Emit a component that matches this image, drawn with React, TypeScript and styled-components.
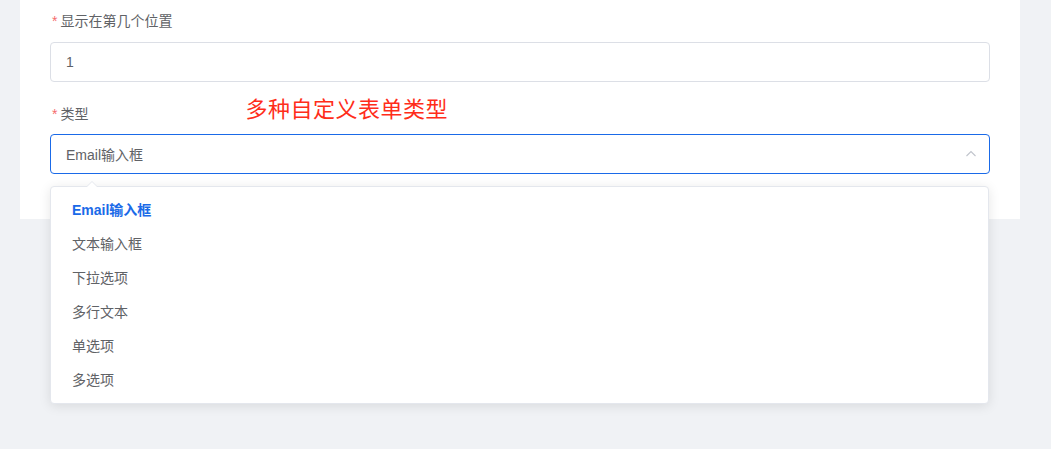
import React from "react";
import styled, { createGlobalStyle } from "styled-components";

const Global = createGlobalStyle`
  html, body { margin: 0; padding: 0; background: #f0f2f5; }
  body { font-family: "Liberation Sans", "Noto Sans CJK SC", sans-serif; }
  * { box-sizing: border-box; }
`;

const Page = styled.div`
  width: 1051px;
  height: 449px;
  padding: 0 31px 0 20px;
  position: relative;
`;

const Card = styled.div`
  background: #ffffff;
  width: 1000px;
  padding: 10px 30px 45px 30px;
`;

const LabelRow = styled.div`
  display: flex;
  align-items: center;
  height: 22px;
  margin-bottom: ${(p: { $mb: number }) => p.$mb}px;
`;

const Label = styled.label`
  font-size: 14px;
  color: #606266;
  line-height: 22px;
  padding-left: 2px;
  &::before {
    content: "*";
    color: #f56c6c;
    margin-right: 3px;
  }
`;

const Note = styled.span`
  margin-left: 157px;
  margin-top: -14px;
  font-size: 22px;
  line-height: 26px;
  color: #ff2d1a;
  font-family: "Noto Sans CJK SC", sans-serif;
  letter-spacing: 0.5px;
`;

const Field = styled.div<{ $focus?: boolean; $mb?: number }>`
  height: 40px;
  border: 1px solid ${(p) => (p.$focus ? "#1a6ae8" : "#dcdfe6")};
  border-radius: 4px;
  display: flex;
  align-items: center;
  justify-content: space-between;
  padding: 0 12px 0 15px;
  font-size: 14px;
  color: #606266;
  margin-bottom: ${(p) => p.$mb ?? 0}px;
`;

const Dropdown = styled.div`
  position: absolute;
  left: 50px;
  top: 186px;
  width: 939px;
  background: #fff;
  border: 1px solid #e4e7ed;
  border-radius: 4px;
  box-shadow: 0 2px 12px rgba(0, 0, 0, 0.1);
  padding: 6px 0;
  &::before {
    content: "";
    position: absolute;
    top: -6px;
    left: 35px;
    width: 0;
    height: 0;
    border-left: 6px solid transparent;
    border-right: 6px solid transparent;
    border-bottom: 6px solid #e4e7ed;
  }
  &::after {
    content: "";
    position: absolute;
    top: -5px;
    left: 36px;
    width: 0;
    height: 0;
    border-left: 5px solid transparent;
    border-right: 5px solid transparent;
    border-bottom: 5px solid #fff;
  }
`;

const Option = styled.div<{ $active?: boolean }>`
  height: 34px;
  line-height: 34px;
  padding: 0 20px 0 21px;
  font-size: 14px;
  color: ${(p) => (p.$active ? "#1a6ae8" : "#606266")};
  font-weight: ${(p) => (p.$active ? 700 : 400)};
`;

const options = ["Email输入框", "文本输入框", "下拉选项", "多行文本", "单选项", "多选项"];

export default function App() {
  return (
    <Page>
      <Global />
      <Card>
        <LabelRow $mb={10}>
          <Label>显示在第几个位置</Label>
        </LabelRow>
        <Field $mb={21}>1</Field>
        <LabelRow $mb={9}>
          <Label>类型</Label>
          <Note>多种自定义表单类型</Note>
        </LabelRow>
        <Field $focus>
          <span>Email输入框</span>
          <svg width="12" height="12" viewBox="0 0 12 12">
            <path d="M1.5 8 L6 3.5 L10.5 8" fill="none" stroke="#c0c4cc" strokeWidth="1.1" />
          </svg>
        </Field>
      </Card>
      <Dropdown>
        {options.map((o, i) => (
          <Option key={o} $active={i === 0}>
            {o}
          </Option>
        ))}
      </Dropdown>
    </Page>
  );
}
